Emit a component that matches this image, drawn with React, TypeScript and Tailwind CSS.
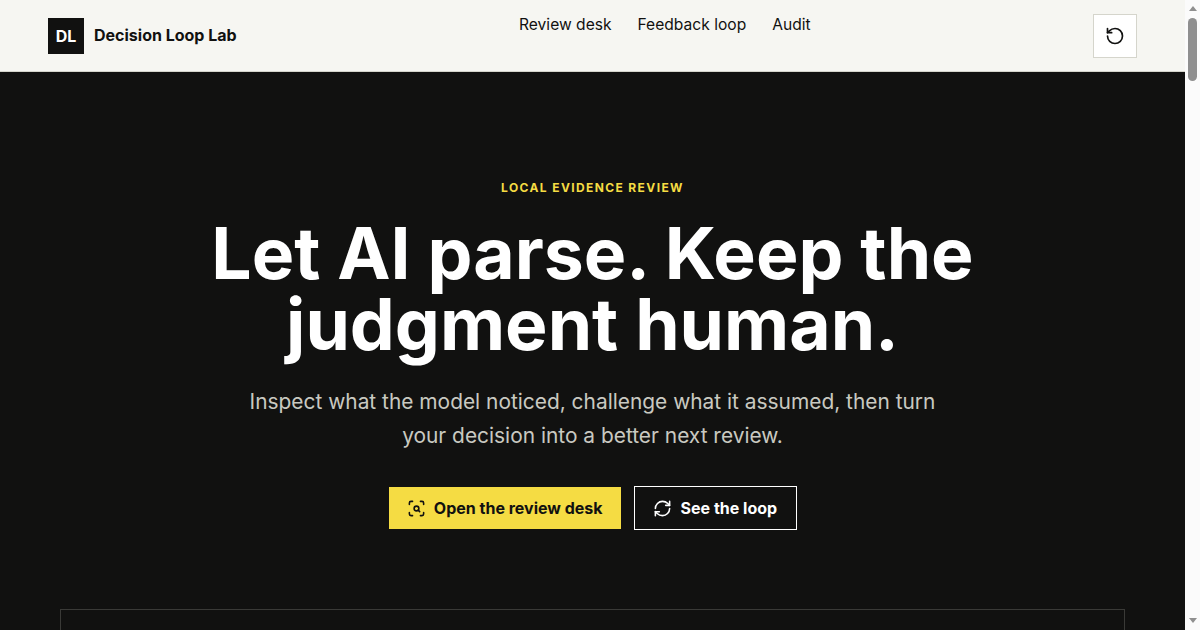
import { RotateCcw, ScanSearch, RefreshCw } from "lucide-react";

export default function App() {
  return (
    <div className="h-[630px] flex overflow-hidden bg-[#111110] font-['Inter',sans-serif]">
      <div className="flex-1 min-w-0">
        {/* Header */}
        <header className="h-[72px] bg-[#f6f6f2] border-b border-[#d5d5cc] px-[48px] flex items-center">
          <div className="flex items-center gap-[10px] w-[471px]">
            <div className="w-[36px] h-[36px] bg-[#111110] text-white flex items-center justify-center text-[16px] font-bold">DL</div>
            <span className="text-[16px] font-bold text-[#111110] pb-[2px]">Decision Loop Lab</span>
          </div>
          <nav className="flex gap-[26px] self-start pt-[13px] text-[15.6px] text-[#111110]">
            <a>Review desk</a>
            <a>Feedback loop</a>
            <a>Audit</a>
          </nav>
          <button className="ml-auto w-[44px] h-[44px] bg-white border border-[#d5d5cc] flex items-center justify-center text-[#111110]">
            <RotateCcw size={20} />
          </button>
        </header>

        {/* Hero */}
        <section className="flex flex-col items-center pt-[109px]">
          <p className="text-[12px] font-bold tracking-[0.115em] text-[#f5dc43] uppercase leading-[14px]">Local evidence review</p>
          <h1 className="mt-[23px] text-[71.4px] font-bold leading-[71px] text-white text-center w-[900px]">
            Let AI parse. Keep the judgment human.
          </h1>
          <p className="mt-[25px] text-[20.9px] leading-[34px] text-[#c9c9c1] text-center w-[720px]">
            Inspect what the model noticed, challenge what it assumed, then turn your decision into a better next review.
          </p>
          <div className="mt-[33px] ml-[1px] flex gap-[13px] items-center">
            <button className="h-[42px] pl-[18px] pr-[18px] bg-[#f5dc43] text-[#111110] flex items-center gap-[8px] text-[16px] font-bold">
              <ScanSearch size={19} /> Open the review desk
            </button>
            <button className="h-[44px] pl-[18px] pr-[19px] border border-white text-white flex items-center gap-[9px] text-[16px] font-bold">
              <RefreshCw size={19} /> See the loop
            </button>
          </div>
          <div className="mt-[79px] w-[1065px] h-[200px] border border-[#3a3a37]" />
        </section>
      </div>

      {/* Scrollbar */}
      <div className="w-[15px] bg-[#fbfbfb] flex flex-col items-center pt-[6px] pb-[7px] shrink-0">
        <div className="w-0 h-0 border-x-[4.5px] border-x-transparent border-b-[5px] border-b-[#8f8f8f]" />
        <div className="mt-[7px] w-[9px] h-[63px] rounded-full bg-[#8f8f8f]" />
        <div className="mt-auto w-0 h-0 border-x-[4.5px] border-x-transparent border-t-[5px] border-t-[#8f8f8f]" />
      </div>
    </div>
  );
}
